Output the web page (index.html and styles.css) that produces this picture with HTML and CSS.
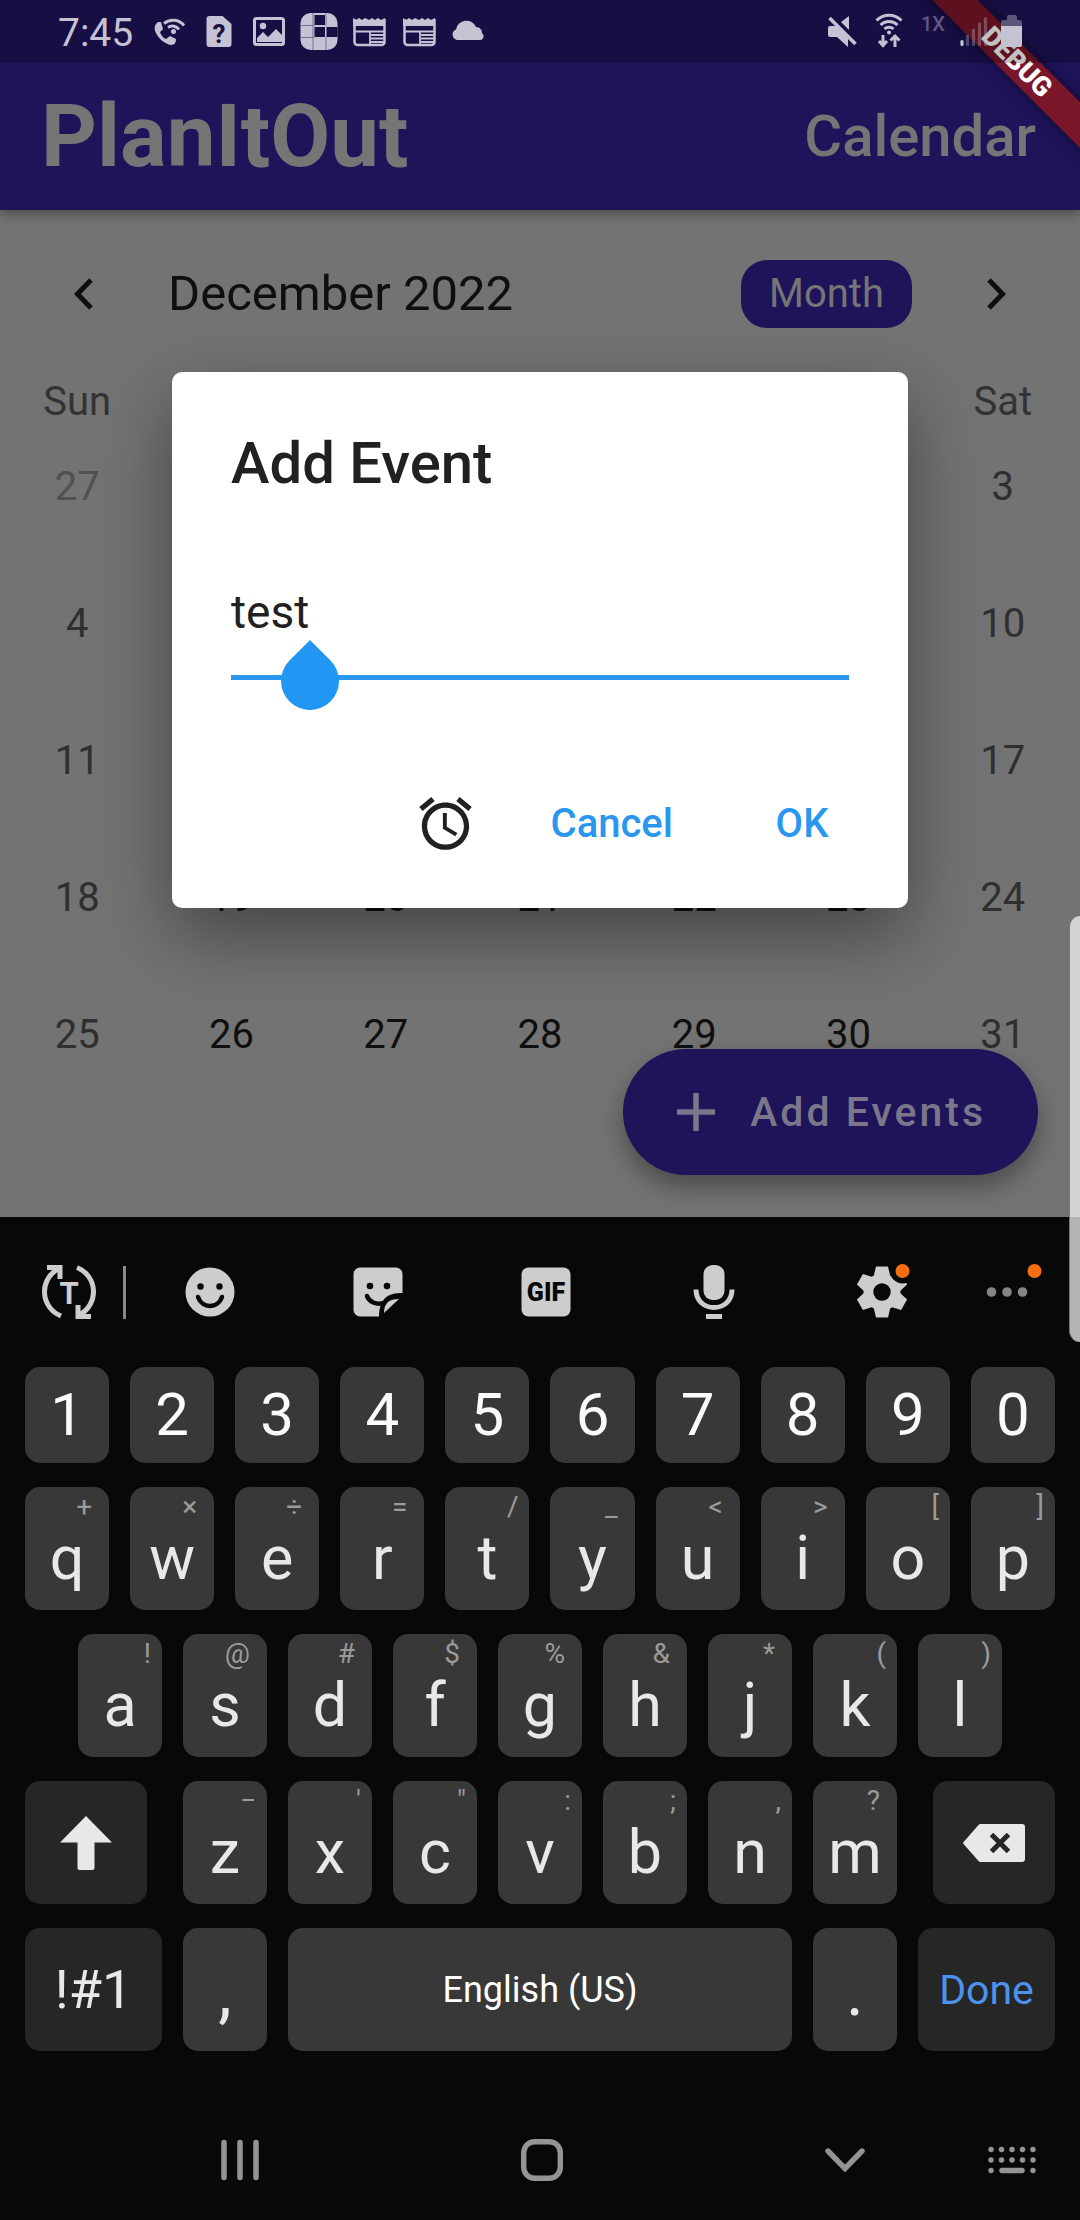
FILE: index.html
```html
<!DOCTYPE html>
<html lang="en">
<head>
<meta charset="utf-8">
<meta name="viewport" content="width=device-width, initial-scale=1">
<title>PlanItOut</title>
<link rel="stylesheet" href="styles.css">
</head>
<body>
<div class="phone">
  <div class="app">
    <header class="top">
      <div class="status">
        <span class="time">7:45</span>
        <svg width="50" height="63" viewBox="144 0 50 63" aria-hidden="true"><path d="M158 22c-4 3-4 7-2 11 3 6 9 11 15 12 4 0 5-3 5-6l-6-3-4 3c-3-1-5-4-6-7l3-3-2-7z" fill="currentColor"/><g fill="none" stroke="currentColor" stroke-width="3"><path d="M164 23.500a14 14 0 0 1 20 2"/><path d="M168 27.500a8 8 0 0 1 11 2"/></g><circle cx="173.500" cy="31.500" r="2.500" fill="currentColor"/></svg>
        <svg width="50" height="63" viewBox="194.500 0 50 63" aria-hidden="true"><path d="M210 16h13l9 8v20a3 3 0 0 1-3 3h-19a3 3 0 0 1-3-3V19a3 3 0 0 1 3-3z" fill="currentColor"/><text x="219.500" y="43" class="sim-mark">?</text></svg>
        <svg width="50" height="63" viewBox="244 0 50 63" aria-hidden="true"><rect x="254.500" y="18.500" width="29" height="26" rx="2" fill="none" stroke="currentColor" stroke-width="3"/><circle cx="263" cy="26" r="3.200" fill="currentColor"/><path d="M257 42v-4l6-6 5 5 8-8 6 6v7z" fill="currentColor"/></svg>
        <svg width="50" height="63" viewBox="293.500 0 50 63" aria-hidden="true"><rect x="300" y="13" width="37" height="37" rx="10" fill="currentColor"/><g fill="#180f42"><rect x="314" y="15" width="10.500" height="10"/><rect x="314" y="27" width="10.500" height="10"/><rect x="326" y="27" width="11" height="10"/></g><g stroke="#77719a"><path d="M300 25.500h14M300 37.500h14M312.500 13v37M325.500 13v13M325.500 37v13"/></g></svg>
        <svg width="50" height="63" viewBox="344 0 50 63" aria-hidden="true"><path d="M354.500 19v23a3 3 0 0 0 3 3h24a3 3 0 0 0 3-3V19" fill="none" stroke="currentColor" stroke-width="2.500"/><path d="M353 18l3 2 3-2 3 2 3-2 4 2 3-2 3 2 3-2 3 2 4-2v8h-32z" fill="currentColor"/><path d="M355 31.500h29M370 31v13M371 35h13M371 38.500h13M371 42h13" stroke="currentColor" stroke-width="1.800"/></svg>
        <svg width="50" height="63" viewBox="344 0 50 63" aria-hidden="true"><path d="M354.500 19v23a3 3 0 0 0 3 3h24a3 3 0 0 0 3-3V19" fill="none" stroke="currentColor" stroke-width="2.500"/><path d="M353 18l3 2 3-2 3 2 3-2 4 2 3-2 3 2 3-2 3 2 4-2v8h-32z" fill="currentColor"/><path d="M355 31.500h29M370 31v13M371 35h13M371 38.500h13M371 42h13" stroke="currentColor" stroke-width="1.800"/></svg>
        <svg width="50" height="63" viewBox="444 0 50 63" aria-hidden="true"><path d="M457 40a5.500 5.500 0 0 1-1-10.500 10.500 10.500 0 0 1 20-2.500c4 0 6 3 6 6a4 4 0 0 1-1 7z" fill="currentColor"/></svg>
        <span class="spacer"></span>
        <svg width="48" height="63" viewBox="818 0 48 63" aria-hidden="true"><path d="M841 22l8-6v14zM848 36v11l-11-10h-7a2 2 0 0 1-2-2v-7a2 2 0 0 1 2-2h7z" fill="currentColor"/><path d="M829.500 18l26 26" stroke="currentColor" stroke-width="3.500"/></svg>
        <svg width="46" height="63" viewBox="866 0 46 63" aria-hidden="true"><g fill="none" stroke="currentColor" stroke-width="3"><path d="M876.500 20.500a17.500 17.500 0 0 1 25 0M880.500 25a12 12 0 0 1 17 0M884.500 29a6.500 6.500 0 0 1 9 0"/><path d="M883 35v11M879 41l4 4.500 4-4.500M895 47V36M890.500 40.500l4.500-4.500 4.500 4.500"/></g><circle cx="889" cy="32.500" r="2" fill="currentColor"/></svg>
        <span class="net">1X</span>
        <svg width="40" height="63" viewBox="954 0 40 63" aria-hidden="true"><g stroke="currentColor" stroke-width="3.200" stroke-linecap="round"><path d="M962 41.500v3"/><path d="M967.500 36v8.500M973.500 30v14.500M979.500 24v20.500M985.500 18.500v26" opacity=".32"/></g></svg>
        <svg width="36" height="63" viewBox="994 0 36 63" aria-hidden="true"><path d="M1001 26v-4a2 2 0 0 1 2-2h4v-3a2 2 0 0 1 2-2h6a2 2 0 0 1 2 2v3h3a2 2 0 0 1 2 2v4z" fill="currentColor" opacity=".4"/><path d="M1001 26h21v19a2 2 0 0 1-2 2h-17a2 2 0 0 1-2-2z" fill="currentColor"/></svg>
      </div>
      <div class="appbar">
        <h1>PlanItOut</h1>
        <span class="page-name">Calendar</span>
      </div>
      <div class="debug-corner"><span class="debug">DEBUG</span></div>
    </header>

    <main>
      <div class="cal-head">
        <button class="arrow" aria-label="Previous month"><svg width="20" height="32" viewBox="0 0 20 32"><path d="M17 2L3.500 16 17 30" fill="none" stroke="currentColor" stroke-width="5"/></svg></button>
        <h2>December 2022</h2>
        <button class="chip">Month</button>
        <button class="arrow" aria-label="Next month"><svg width="20" height="32" viewBox="0 0 20 32"><path d="M3 2l13.500 14L3 30" fill="none" stroke="currentColor" stroke-width="5"/></svg></button>
      </div>
      <table class="month">
        <thead><tr><th>Sun</th><th>Mon</th><th>Tue</th><th>Wed</th><th>Thu</th><th>Fri</th><th>Sat</th></tr></thead>
        <tbody>
          <tr><td class="out">27</td><td class="out">28</td><td class="out">29</td><td class="out">30</td><td>1</td><td>2</td><td>3</td></tr>
          <tr><td>4</td><td>5</td><td>6</td><td>7</td><td>8</td><td>9</td><td>10</td></tr>
          <tr><td>11</td><td>12</td><td>13</td><td>14</td><td>15</td><td>16</td><td>17</td></tr>
          <tr><td>18</td><td>19</td><td>20</td><td>21</td><td>22</td><td>23</td><td>24</td></tr>
          <tr><td>25</td><td>26</td><td>27</td><td>28</td><td>29</td><td>30</td><td>31</td></tr>
        </tbody>
      </table>
    </main>

    <button class="fab"><svg width="38" height="38" viewBox="0 0 38 38" aria-hidden="true"><path d="M19 0v38M0 19h38" stroke="currentColor" stroke-width="5.500"/></svg>Add Events</button>

    <section class="dialog" role="dialog" aria-labelledby="dialog-title">
      <h2 id="dialog-title">Add Event</h2>
      <div class="field">
        <input type="text" value="test" aria-label="Event name">
        <svg class="handle" width="58" height="70" viewBox="0 0 58 70" aria-hidden="true"><path d="M29 0L49.500 20.500a29 29 0 1 1-41 0z" fill="#2196f3"/></svg>
      </div>
      <div class="actions">
        <button class="alarm" aria-label="Set time"><svg width="63" height="63" viewBox="0 0 24 24"><path fill="currentColor" d="M22 5.720l-4.600-3.860-1.290 1.530 4.600 3.860L22 5.720zM7.880 3.390L6.600 1.860 2 5.710l1.290 1.530 4.590-3.850zM12.500 8H11v6l4.750 2.850.75-1.230-4-2.370V8zM12 4c-4.970 0-9 4.030-9 9s4.020 9 9 9c4.970 0 9-4.030 9-9s-4.030-9-9-9zm0 16c-3.870 0-7-3.130-7-7s3.130-7 7-7 7 3.130 7 7-3.130 7-7 7z"/></svg></button>
        <button class="text-btn">Cancel</button>
        <button class="text-btn">OK</button>
      </div>
    </section>
  </div>

  <section class="keyboard" aria-label="Keyboard">
    <div class="tools">
      <button aria-label="Text tools"><svg width="58" height="58" viewBox="0 0 58 58"><g fill="none" stroke="currentColor" stroke-width="5"><path d="M21 53A26 26 0 0 1 18 6"/><path d="M7 4.500h13V16"/><path d="M37 4.500a26 26 0 0 1 3 47"/><path d="M51 53.500H38V42"/></g><text x="29" y="41" class="tool-t">T</text></svg></button>
      <span class="rule"></span>
      <button aria-label="Emoji"><svg width="50" height="50" viewBox="0 0 50 50"><circle cx="25" cy="25" r="24.500" fill="currentColor"/><circle cx="15.500" cy="19.500" r="3.200" fill="#080808"/><circle cx="34.500" cy="19.500" r="3.200" fill="#080808"/><path d="M13 30c4 12 20 12 24 0" fill="none" stroke="#080808" stroke-width="4.500" stroke-linecap="round"/></svg></button>
      <button aria-label="Stickers"><svg width="50" height="50" viewBox="0 0 50 50"><path d="M7 .500h36a6.500 6.500 0 0 1 6.500 6.500v19C35 26 26.500 31 26 49.500H7A6.500 6.500 0 0 1 .500 43V7A6.500 6.500 0 0 1 7 .500z" fill="currentColor"/><path d="M46 32L31 46c0-10 5-14 15-14z" fill="currentColor"/><circle cx="17" cy="19" r="3.300" fill="#080808"/><circle cx="34" cy="19" r="3.300" fill="#080808"/><path d="M14 29c2 6 9 9 17 7" fill="none" stroke="#080808" stroke-width="4.500" stroke-linecap="round"/></svg></button>
      <button aria-label="GIF"><svg width="50" height="50" viewBox="0 0 50 50"><rect x=".5" y=".5" width="49" height="49" rx="7" fill="currentColor"/><text x="25" y="34" class="tool-gif">GIF</text></svg></button>
      <button aria-label="Voice input"><svg width="42" height="56" viewBox="0 0 42 56"><rect x="10.500" y="1" width="21" height="35" rx="9" fill="currentColor"/><path d="M3 25.500c0 24 36 24 36 0" fill="none" stroke="currentColor" stroke-width="5"/><path d="M13 52.500h16" stroke="currentColor" stroke-width="5"/></svg></button>
      <button aria-label="Settings"><svg width="60" height="60" viewBox="-30 -30 60 60"><g fill="currentColor"><circle r="18.500"/><path id="cog" d="M-6-25.500H6L8.500-15v30L6 25.500H-6L-8.500 15v-30z"/><use href="#cog" transform="rotate(60)"/><use href="#cog" transform="rotate(120)"/></g><circle r="8.700" fill="#080808"/><circle cx="20.500" cy="-21" r="12.500" fill="#080808"/><circle cx="20.500" cy="-21" r="7" fill="#f76d12"/></svg></button>
      <button aria-label="More"><svg width="72" height="60" viewBox="-36 -30 72 60"><g fill="#858585"><circle cx="-15.500" r="4.800"/><circle r="4.800"/><circle cx="15.500" r="4.800"/></g><circle cx="27.500" cy="-21" r="7" fill="#f76d12"/></svg></button>
    </div>

    <div class="rows">
      <div class="row nums"><button>1</button><button>2</button><button>3</button><button>4</button><button>5</button><button>6</button><button>7</button><button>8</button><button>9</button><button>0</button></div>
      <div class="row">
        <button>q<small>+</small></button><button>w<small>×</small></button><button>e<small>÷</small></button><button>r<small>=</small></button><button>t<small class="slim">/</small></button><button>y<small>_</small></button><button>u<small>&lt;</small></button><button>i<small>&gt;</small></button><button>o<small class="slim">[</small></button><button>p<small class="slim">]</small></button>
      </div>
      <div class="row home">
        <button>a<small class="slim">!</small></button><button>s<small>@</small></button><button>d<small>#</small></button><button>f<small>$</small></button><button>g<small>%</small></button><button>h<small>&amp;</small></button><button>j<small>*</small></button><button>k<small class="slim">(</small></button><button>l<small class="slim">)</small></button>
      </div>
      <div class="row">
        <button class="dark shift" aria-label="Shift"><svg width="54" height="54" viewBox="0 0 54 54"><path d="M27 0L53 26.500H35.500V52a2 2 0 0 1-2 2h-13a2 2 0 0 1-2-2V26.500H1z" fill="currentColor"/></svg></button>
        <button>z<small class="slim">−</small></button><button>x<small class="slim">'</small></button><button>c<small class="slim">"</small></button><button>v<small class="slim">:</small></button><button>b<small class="slim">;</small></button><button>n<small class="slim">,</small></button><button>m<small>?</small></button>
        <button class="dark erase" aria-label="Backspace"><svg width="62" height="38" viewBox="0 0 62 38"><path d="M17.500 0H59a3 3 0 0 1 3 3v32a3 3 0 0 1-3 3H17.500a3 3 0 0 1-2-1L1 20.500a2 2 0 0 1 0-3L15.500 1a3 3 0 0 1 2-1z" fill="currentColor"/><path d="M28.500 10.500l17 17M45.500 10.500l-17 17" stroke="#262626" stroke-width="5"/></svg></button>
      </div>
      <div class="row">
        <button class="dark wide symbols">!#1</button><button class="punct">,</button><button class="space">English (US)</button><button class="punct">.</button><button class="dark wide done">Done</button>
      </div>
    </div>

    <nav class="nav">
      <button aria-label="Recent apps"><svg width="38" height="42" viewBox="0 0 38 42"><path d="M3 3.500v35M19 3.500v35M35 3.500v35" stroke="currentColor" stroke-width="5.500" stroke-linecap="round"/></svg></button>
      <button aria-label="Home"><svg width="42" height="42" viewBox="0 0 42 42"><rect x="2.700" y="2.700" width="36.600" height="36.600" rx="11" fill="none" stroke="currentColor" stroke-width="5.400"/></svg></button>
      <button aria-label="Hide keyboard"><svg width="40" height="24" viewBox="0 0 40 24"><path d="M3 3l17 17.500L37 3" fill="none" stroke="currentColor" stroke-width="5.400" stroke-linecap="round"/></svg></button>
      <button aria-label="Switch keyboard"><svg width="48" height="28" viewBox="0 0 48 28"><path d="M3 3.500h43M3 14h43" stroke="currentColor" stroke-width="5.500" stroke-linecap="round" stroke-dasharray="0 10.500"/><path d="M3 24.500h0M45 24.500h0M14 24.500h20" stroke="currentColor" stroke-width="5.500" stroke-linecap="round"/></svg></button>
    </nav>
  </section>
  <div class="edge-panel"></div>
</div>
</body>
</html>
```
FILE: styles.css
```css
* { box-sizing: border-box; }
body {
  margin: 0;
  background: #080808;
  font-family: Roboto, "Liberation Sans", sans-serif;
}
button {
  margin: 0;
  padding: 0;
  border: 0;
  background: none;
  color: inherit;
  font: inherit;
}
svg { display: block; flex: none; }
h1, h2 { margin: 0; }

.phone {
  position: relative;
  display: flex;
  flex-direction: column;
  min-height: 100vh;
  overflow: hidden;
}
.app { position: relative; background: #737373; }

/* status bar and app bar */
.top {
  position: relative;
  background: #1f135a;
  color: #757575;
  box-shadow: 0 4px 12px rgba(0, 0, 0, .35);
}
.status {
  position: relative;
  z-index: 2;
  display: flex;
  align-items: center;
  height: 63px;
  padding: 0 50px 0 58px;
  background: rgba(0, 0, 0, .24);
  color: #c5c2d3;
}
.time { width: 86px; font-size: 39px; line-height: 48px; padding-top: 3px; }
.spacer { flex: 1; }
.net {
  width: 42px;
  padding-bottom: 16px;
  color: #5f5880;
  font-size: 20px;
  font-weight: 500;
  line-height: 24px;
  text-align: center;
}
.sim-mark { fill: #180f42; font-size: 26px; font-weight: 700; text-anchor: middle; }
.appbar {
  display: flex;
  align-items: center;
  justify-content: space-between;
  height: 147px;
  padding: 0 44px 2px 41px;
}
.appbar h1 { font-size: 87px; font-weight: 700; line-height: 100px; }
.page-name { font-size: 58px; font-weight: 500; line-height: 68px; }
.debug-corner {
  position: absolute;
  inset: 0 0 auto auto;
  width: 210px;
  height: 210px;
  overflow: hidden;
}
.debug {
  position: absolute;
  top: 46px;
  right: -87px;
  width: 300px;
  background: #7b172a;
  box-shadow: 0 0 14px rgba(0, 0, 0, .5);
  color: #fff;
  font-size: 27px;
  font-weight: 900;
  line-height: 32px;
  text-align: center;
  transform: rotate(45deg);
}

/* calendar */
main { padding-bottom: 70px; }
.cal-head { display: flex; align-items: center; height: 167px; color: #0f0f0f; }
.arrow { display: flex; justify-content: center; width: 168px; }
.cal-head h2 { flex: 1; font-size: 49px; font-weight: 400; line-height: 60px; }
.chip {
  height: 68px;
  padding: 0 28px;
  border-radius: 26px;
  background: #1f135a;
  color: #757575;
  font-size: 40px;
  line-height: 48px;
}
.month {
  width: 100%;
  table-layout: fixed;
  border-collapse: collapse;
  color: #0f0f0f;
  font-size: 40px;
  line-height: 50px;
  text-align: center;
}
.month th { height: 85px; padding: 0; color: #333; font-weight: 400; vertical-align: top; }
.month td { height: 137px; padding: 0; vertical-align: top; }
.month td:first-child, .month td:last-child { color: #2f2f2f; }
.month .out, .month .out:first-child { color: #515151; }
/* cells lying wholly under the open dialog */
.month th:not(:first-child, :last-child),
.month tr:nth-child(-n+3) td:not(:first-child, :last-child) { visibility: hidden; }

.fab {
  position: absolute;
  right: 42px;
  bottom: 42px;
  display: flex;
  align-items: center;
  gap: 35px;
  height: 126px;
  padding: 0 52px 0 54px;
  border-radius: 63px;
  background: #1f135a;
  box-shadow: 0 12px 24px rgba(0, 0, 0, .35);
  color: #7a778a;
  font-size: 41px;
  font-weight: 500;
  letter-spacing: 3px;
}

/* dialog */
.dialog {
  position: absolute;
  top: 372px;
  right: 172px;
  left: 172px;
  padding: 57px 39px 45px 59px;
  border-radius: 10px;
  background: #fff;
  box-shadow: 0 28px 72px rgba(0, 0, 0, .4);
  color: #212121;
}
.dialog h2 { font-size: 58px; font-weight: 500; line-height: 68px; }
.field { position: relative; margin: 83px 20px 0 0; }
.field input {
  display: block;
  width: 100%;
  height: 100px;
  padding: 0 0 31px;
  border: 0;
  border-bottom: 5px solid #2a97ee;
  outline: 0;
  background: none;
  color: inherit;
  font: 46px/64px Roboto, "Liberation Sans", sans-serif;
}
.handle { position: absolute; top: 60px; left: 50px; }
.actions { display: flex; justify-content: flex-end; gap: 38px; margin-top: 103px; }
.alarm { padding: 0 12px; }
.text-btn {
  min-width: 134px;
  height: 80px;
  padding: 0 24px;
  color: #2a97ee;
  font-size: 40px;
  font-weight: 500;
}

/* keyboard */
.keyboard { flex: 1; background: #080808; color: #e8e8e8; }
.tools {
  display: grid;
  grid-template-columns: 123fr 3px repeat(5, 168fr) 82fr 32fr;
  align-items: center;
  height: 150px;
  color: #cdcdcd;
}
.tools button { display: flex; justify-content: center; }
.tools button:first-child { padding-left: 14px; }
.rule { height: 53px; background: #888; }
.tool-t { fill: currentColor; font-size: 31px; font-weight: 700; text-anchor: middle; }
.tool-gif { fill: #080808; font-size: 25px; font-weight: 900; text-anchor: middle; }

.rows { display: flex; flex-direction: column; gap: 24px; padding: 0 25px; }
.row { display: flex; gap: 21px; height: 123px; }
.row.home { padding: 0 53px; }
.row.nums { height: 96px; color: #fbfbfb; }
.row button {
  position: relative;
  display: flex;
  flex: 84 1 0;
  align-items: center;
  justify-content: center;
  min-width: 0;
  padding-top: 18px;
  border-radius: 15px;
  background: #383838;
  font-size: 61px;
  line-height: 70px;
}
.row.nums button { padding: 0; font-size: 60px; }
.row small {
  position: absolute;
  top: 4px;
  right: 17px;
  color: #9b9b9b;
  font-size: 28px;
  line-height: 32px;
}
.row small.slim { right: 11px; }
.row .dark { padding: 0; background: #262626; }
.row .shift { flex-grow: 122; margin-right: 15px; }
.row .erase { flex-grow: 122; margin-left: 15px; }
.row .wide { flex-grow: 137; }
.row .space { flex-grow: 504; padding: 0; color: #fff; font-size: 36px; }
.row .symbols { font-size: 54px; }
.row .done { color: #4a94f0; font-size: 41px; }
.row .punct { padding-top: 4px; font-size: 68px; }

.nav {
  display: grid;
  grid-template-columns: 120fr 240fr 62fr 240fr 63fr 240fr 94fr 21fr;
  align-items: center;
  height: 169px;
  padding-top: 49px;
  color: #949494;
}
.nav button { display: flex; justify-content: center; }
.nav button:nth-child(1) { grid-column: 2; }
.nav button:nth-child(2) { grid-column: 4; }
.nav button:nth-child(3) { grid-column: 6; }
.nav button:nth-child(4) { grid-column: 7; }

.edge-panel {
  position: absolute;
  top: 916px;
  right: 0;
  width: 11px;
  height: 426px;
  border-left: 1px solid #777;
  border-radius: 20px 0 0 20px;
  background: rgba(253, 253, 253, .7);
}
```
